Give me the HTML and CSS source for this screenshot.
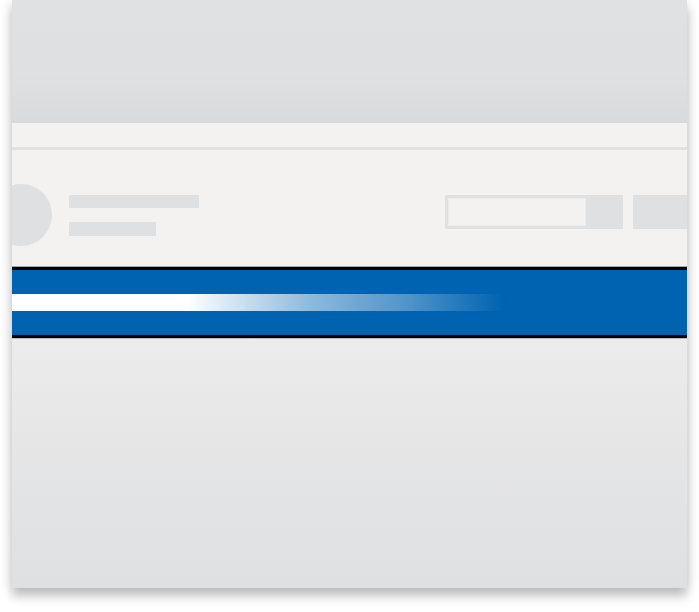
FILE: index.html
```html
<!DOCTYPE html>
<html>
<head>
<meta charset="utf-8">
<link rel="stylesheet" href="styles.css">
</head>
<body>
<div class="panel">
  <div class="top"></div>
  <div class="bar"></div>
  <div class="card">
    <div class="avatar"></div>
    <div class="lines">
      <div class="line line-long"></div>
      <div class="line line-short"></div>
    </div>
    <div class="actions">
      <div class="search"><div class="search-field"></div></div>
      <div class="button"></div>
    </div>
  </div>
  <div class="progress"><div class="stripe"></div></div>
  <div class="bottom"></div>
</div>
</body>
</html>
```
FILE: styles.css
```css
html, body {
  margin: 0;
  padding: 0;
  background: #ffffff;
}
body {
  width: 699px;
  height: 612px;
  overflow: hidden;
  font-family: "Liberation Sans", sans-serif;
}
.panel {
  margin-left: 12px;
  width: 675px;
  height: 588px;
  overflow: hidden;
  display: flex;
  flex-direction: column;
  box-shadow: 0 8px 10px rgba(0,0,0,0.24), 0 0 14px rgba(0,0,0,0.08);
}
.top {
  height: 123px;
  flex: none;
  background: linear-gradient(#e0e1e3 0%, #dfe0e2 60%, #d9dadc 100%);
}
.bar {
  height: 24px;
  flex: none;
  background: #f3f2f0;
  border-bottom: 3px solid #e0e1e3;
}
.card {
  height: 117px;
  flex: none;
  background: #f3f2f0;
  display: flex;
  align-items: flex-start;
}
.avatar {
  flex: none;
  width: 62px;
  height: 62px;
  border-radius: 50%;
  background: #dfe0e2;
  margin-left: -22px;
  margin-top: 34px;
}
.lines {
  margin-left: 17px;
  margin-top: 45px;
  display: flex;
  flex-direction: column;
  gap: 14px;
}
.line {
  background: #dfe0e2;
}
.line-long { width: 130px; height: 13px; }
.line-short { width: 87px; height: 14px; }
.actions {
  margin-left: auto;
  margin-right: -40px;
  margin-top: 45px;
  display: flex;
  gap: 10px;
}
.search {
  width: 178px;
  height: 34px;
  box-sizing: border-box;
  padding: 3px;
  background: #dfe0e2;
}
.search-field {
  width: 138px;
  height: 28px;
  box-sizing: border-box;
  background: #f3f2f0;
  border: 1px solid #ebebeb;
}
.button {
  width: 94px;
  height: 34px;
  background: #dfe0e2;
}
.progress {
  flex: none;
  height: 41px;
  padding-top: 24px;
  background: #0063b1;
  border-top: 3px solid #000;
  border-bottom: 3px solid #000;
  box-shadow: 0 -1px 0 #a8a5a3, 0 1px 0 #bdbdbd;
  position: relative;
  z-index: 1;
}
.stripe {
  width: 491px;
  height: 17px;
  background: linear-gradient(to right,
    #ffffff 0px,
    #ffffff 176px,
    rgba(255,255,255,0.85) 215px,
    rgba(255,255,255,0.55) 300px,
    rgba(255,255,255,0.3) 400px,
    rgba(255,255,255,0) 491px);
}
.bottom {
  flex: 1;
  background: linear-gradient(#ececec 0%, #e6e6e7 40%, #dfe0e2 100%);
}
```
